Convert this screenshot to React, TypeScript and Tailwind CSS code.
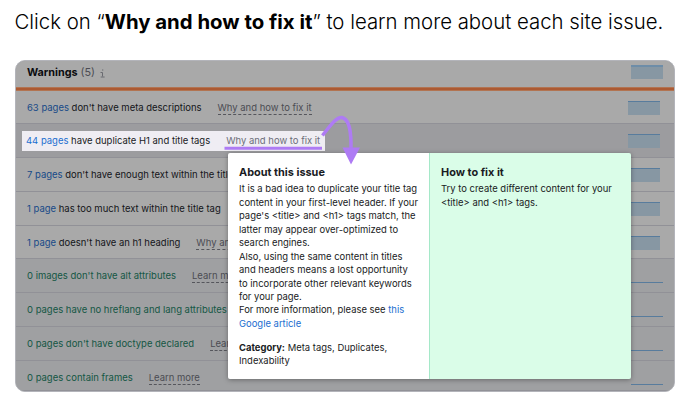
type Row = {
  count: string;
  text: string;
  action: string;
  kind: "warning" | "active" | "passed";
  height: string;
};

const rows: Row[] = [
  { count: "63 pages", text: "don't have meta descriptions", action: "Why and how to fix it", kind: "warning", height: "h-[33px]" },
  { count: "44 pages", text: "have duplicate H1 and title tags", action: "Why and how to fix it", kind: "active", height: "h-[34px]" },
  { count: "7 pages", text: "don't have enough text within the title", action: "", kind: "warning", height: "h-[34px]" },
  { count: "1 page", text: "has too much text within the title tag", action: "", kind: "warning", height: "h-[34px]" },
  { count: "1 page", text: "doesn't have an h1 heading", action: "Why and", kind: "warning", height: "h-[33px]" },
  { count: "", text: "0 images don't have alt attributes", action: "Learn more", kind: "passed", height: "h-[34px]" },
  { count: "", text: "0 pages have no hreflang and lang attributes", action: "", kind: "passed", height: "h-[34px]" },
  { count: "", text: "0 pages don't have doctype declared", action: "Learn", kind: "passed", height: "h-[34px]" },
  { count: "", text: "0 pages contain frames", action: "Learn more", kind: "passed", height: "h-[30px]" },
];

const rowBackground = {
  warning: "bg-[#a9a9a9]",
  active: "bg-[#9c9c9f]",
  passed: "bg-[#9fa0a2]",
};

function Spark({ kind }: { kind: Row["kind"] }) {
  if (kind === "passed") {
    return <div className="mt-[23px] mr-[11px] h-px w-8 bg-[#587c9d]" />;
  }
  return <div className="mt-[10px] mr-[14px] h-[14px] w-8 border-t border-[#587c9d] bg-[#8797a3]" />;
}

function IssueRow({ row }: { row: Row }) {
  const active = row.kind === "active";
  const passed = row.kind === "passed";
  return (
    <div className={`flex shrink-0 items-start justify-between border-b border-[#919197] ${row.height} ${rowBackground[row.kind]}`}>
      <div
        className={`flex h-5 items-center gap-4 whitespace-nowrap ${
          active ? "ml-[6px] mt-[7px] w-[303px] bg-[#efedf3] pl-1" : "ml-[11px] mt-[7px]"
        }`}
      >
        <span className={passed ? "text-[#145744]" : active ? "text-[#191b23]" : "text-[#141519]"}>
          {row.count && <span className={active ? "text-[#1b6ed0]" : "text-[#174a88]"}>{row.count} </span>}
          {row.text}
        </span>
        {row.action && (
          <span className={active ? "text-[#6c6e79]" : "border-b border-dashed border-[#55565c] leading-[12px] text-[#4b4c53]"}>
            {row.action}
          </span>
        )}
      </div>
      <Spark kind={row.kind} />
    </div>
  );
}

function IssuePopup() {
  return (
    <div className="absolute left-[228px] top-[153px] flex h-[226px] w-[403px] overflow-hidden rounded-[2px] text-[9.45px] leading-[13.45px] text-[#191b23] shadow-[0_1px_5px_rgba(0,0,0,0.35)]">
      <div className="w-[201px] whitespace-nowrap bg-white pl-[11px] pt-[12px]">
        <h2 className="mb-[3.4px] text-[10.9px] font-bold leading-[14px]">About this issue</h2>
        <p>
          It is a bad idea to duplicate your title tag<br />
          content in your first-level header. If your<br />
          page's &lt;title&gt; and &lt;h1&gt; tags match, the<br />
          latter may appear over-optimized to<br />
          search engines.<br />
          Also, using the same content in titles<br />
          and headers means a lost opportunity<br />
          to incorporate other relevant keywords<br />
          for your page.<br />
          For more information, please see <span className="text-[#1b6ed0]">this<br />Google article</span>
        </p>
        <p className="mt-[10.5px]">
          <b>Category:</b> Meta tags, Duplicates,<br />Indexability
        </p>
      </div>
      <div className="flex-1 whitespace-nowrap border-l border-[#a5e8c8] bg-[#dafde8] pl-[11px] pt-[12px]">
        <h2 className="mb-[3.4px] text-[10.9px] font-bold leading-[14px]">How to fix it</h2>
        <p>
          Try to create different content for your<br />
          &lt;title&gt; and &lt;h1&gt; tags.
        </p>
      </div>
    </div>
  );
}

export default function App() {
  return (
    <div className="relative h-[416px] w-[691px] overflow-hidden bg-white font-['Inter',sans-serif] text-[9.47px]">
      <h1 className="h-[60px] whitespace-nowrap pl-[14.5px] pt-[8px] text-[20.37px] font-light leading-[28px] text-black">
        Click on “<b className="font-bold">Why and how to fix it</b>” to learn more about each site issue.
      </h1>
      <div className="ml-[15px] flex h-[332px] w-[660px] flex-col overflow-hidden rounded-[10px] border border-[#b3b4ba] bg-[#9fa0a2]">
        <div className="flex h-[26px] shrink-0 justify-between bg-[#a9a9a9]">
          <div className="flex h-6 items-center gap-[3px] pl-[11px] text-[10.8px] text-[#4b4c53]">
            <b className="text-[#0b0c0f]">Warnings</b>
            <span>(5)</span>
            <svg className="ml-[2px]" width="5" height="9" viewBox="0 0 5 9" fill="none" stroke="#696a70">
              <path d="M2 1h1.3M.5 3.5H2.5V7.5M.7 8H4.6" />
            </svg>
          </div>
          <div className="mr-[11px] mt-1 h-[14px] w-8 border-t-2 border-[#6e8da8] bg-[#8797a3]" />
        </div>
        <div className="h-1 shrink-0 border-y border-[#b27452] bg-[#ac5a33]" />
        {rows.map((row) => (
          <IssueRow key={row.text} row={row} />
        ))}
      </div>
      <IssuePopup />
      <svg className="absolute left-[220px] top-[108px]" width="146" height="60" viewBox="220 108 146 60" fill="none">
        <path d="M224.5 148.2H322" stroke="#ae7bf4" strokeWidth="3" />
        <path d="M322.5 135.5C330 126 336 117 342 117.5C349 119 351.5 130 351 151" stroke="#ae7bf4" strokeWidth="3.5" />
        <path d="M342.5 147.5L360 147.5L351 164.5Z" fill="#ae7bf4" />
      </svg>
    </div>
  );
}
